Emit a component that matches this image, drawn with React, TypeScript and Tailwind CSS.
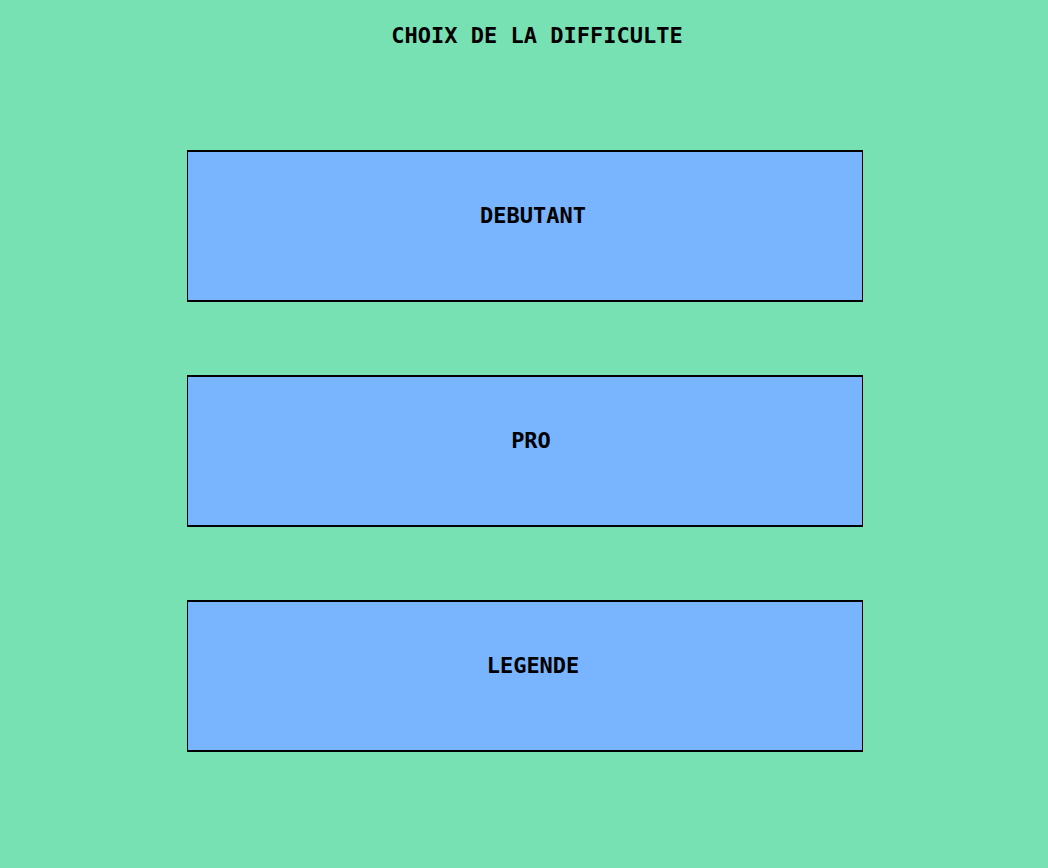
const levels = [
  { label: "DEBUTANT", shift: "pl-4" },
  { label: "PRO", shift: "pl-3" },
  { label: "LEGENDE", shift: "pl-4" },
];

export default function App() {
  return (
    <main className="min-h-screen bg-[#78e1b4] pt-5 pr-6 pb-16 pl-[26px] font-['DejaVu_Sans_Mono',monospace] text-black">
      <h1 className="pl-6 text-center text-[22px] leading-8 font-bold">CHOIX DE LA DIFFICULTE</h1>
      <div className="mx-auto mt-[98px] flex w-full max-w-[676px] flex-col gap-[73px]">
        {levels.map((level) => (
          <button
            key={level.label}
            type="button"
            className={`h-[152px] w-full cursor-pointer border-x border-y-2 border-black bg-[#78b4ff] pb-5 text-center text-[22px] leading-8 font-bold ${level.shift}`}
          >
            {level.label}
          </button>
        ))}
      </div>
    </main>
  );
}
